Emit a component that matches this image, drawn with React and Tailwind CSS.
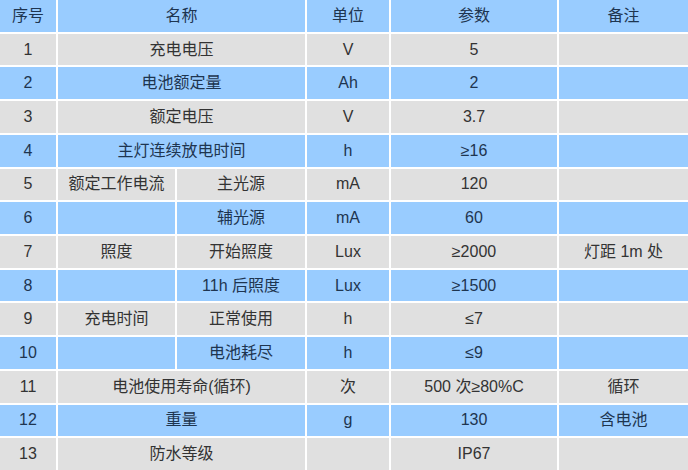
const rows = [
  { no: '1', name: '充电电压', unit: 'V', val: '5', note: '' },
  { no: '2', name: '电池额定量', unit: 'Ah', val: '2', note: '' },
  { no: '3', name: '额定电压', unit: 'V', val: '3.7', note: '' },
  { no: '4', name: '主灯连续放电时间', unit: 'h', val: '≥16', note: '' },
  { no: '5', group: '额定工作电流', sub: '主光源', unit: 'mA', val: '120', note: '' },
  { no: '6', group: '', sub: '辅光源', unit: 'mA', val: '60', note: '' },
  { no: '7', group: '照度', sub: '开始照度', unit: 'Lux', val: '≥2000', note: '灯距 1m 处' },
  { no: '8', group: '', sub: '11h 后照度', unit: 'Lux', val: '≥1500', note: '' },
  { no: '9', group: '充电时间', sub: '正常使用', unit: 'h', val: '≤7', note: '' },
  { no: '10', group: '', sub: '电池耗尽', unit: 'h', val: '≤9', note: '' },
  { no: '11', name: '电池使用寿命(循环)', unit: '次', val: '500 次≥80%C', note: '循环' },
  { no: '12', name: '重量', unit: 'g', val: '130', note: '含电池' },
  { no: '13', name: '防水等级', unit: '', val: 'IP67', note: '' },
];

function Cell({ children, blue, span }) {
  return (
    <div
      className={`flex items-center justify-center whitespace-nowrap ${span ? 'col-span-2' : ''} ${
        blue ? 'bg-[#99ccff] text-[#1e3550]' : 'bg-[#e0e0e0] text-[#333333]'
      }`}
    >
      {children}
    </div>
  );
}

export default function App() {
  return (
    <div
      className="w-[688px] h-[470px] bg-white grid grid-cols-[56px_117px_128px_82px_166px_1fr] grid-rows-[repeat(14,1fr)] gap-[2px] text-[16px]"
      style={{ fontFamily: '"Liberation Sans", Arial, "Noto Sans CJK SC", sans-serif' }}
    >
      <Cell blue>序号</Cell>
      <Cell blue span>名称</Cell>
      <Cell blue>单位</Cell>
      <Cell blue>参数</Cell>
      <Cell blue>备注</Cell>

      {rows.map((r, i) => {
        const blue = i % 2 === 1;
        return [
          <Cell key={r.no + 'a'} blue={blue}>{r.no}</Cell>,
          r.name !== undefined ? (
            <Cell key={r.no + 'b'} blue={blue} span>{r.name}</Cell>
          ) : (
            [
              <Cell key={r.no + 'g'} blue={blue}>{r.group}</Cell>,
              <Cell key={r.no + 's'} blue={blue}>{r.sub}</Cell>,
            ]
          ),
          <Cell key={r.no + 'c'} blue={blue}>{r.unit}</Cell>,
          <Cell key={r.no + 'd'} blue={blue}>{r.val}</Cell>,
          <Cell key={r.no + 'e'} blue={blue}>{r.note}</Cell>,
        ];
      })}
    </div>
  );
}
